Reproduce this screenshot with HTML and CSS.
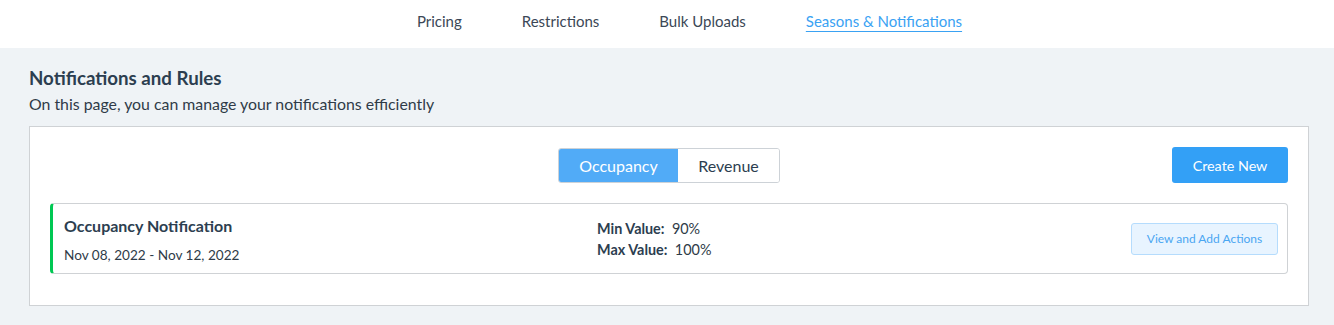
FILE: index.html
```html
<!DOCTYPE html>
<html>
<head>
<meta charset="utf-8">
<link rel="stylesheet" href="styles.css">
</head>
<body>
<nav class="topnav">
  <a class="nav-item">Pricing</a>
  <a class="nav-item">Restrictions</a>
  <a class="nav-item">Bulk Uploads</a>
  <a class="nav-item active">Seasons &amp; Notifications</a>
</nav>
<main class="page">
  <h1 class="title">Notifications and Rules</h1>
  <p class="subtitle">On this page, you can manage your notifications efficiently</p>
  <section class="panel">
    <div class="toolbar">
      <div></div>
      <div class="toggle">
        <button class="toggle-btn on">Occupancy</button>
        <button class="toggle-btn">Revenue</button>
      </div>
      <div class="toolbar-right">
        <button class="create-btn">Create New</button>
      </div>
    </div>
    <div class="card">
      <div class="card-main">
        <div class="card-title">Occupancy Notification</div>
        <div class="card-date">Nov 08, 2022 - Nov 12, 2022</div>
      </div>
      <div class="card-values">
        <div><b>Min Value:</b>&nbsp; 90%</div>
        <div><b>Max Value:</b>&nbsp; 100%</div>
      </div>
      <button class="action-btn">View and Add Actions</button>
    </div>
  </section>
</main>
</body>
</html>
```
FILE: styles.css
```css
* { box-sizing: border-box; }
html, body { margin: 0; padding: 0; }
body {
  font-family: Lato, "Open Sans", sans-serif;
  color: #2c3e50;
  background: #eff3f6;
  width: 1334px;
  height: 325px;
  overflow: hidden;
}
.topnav {
  height: 48px;
  background: #fff;
  display: flex;
  justify-content: center;
  align-items: center;
  gap: 60px;
  padding-left: 45px;
  padding-bottom: 7px;
}
.nav-item {
  font-size: 15px;
  color: #3b4756;
  text-decoration: none;
}
.nav-item.active {
  color: #3aa2f3;
  text-decoration: underline;
  text-underline-offset: 4px;
}
.page {
  padding: 18px 25px 0 29px;
}
.title {
  margin: 0;
  font-size: 18.7px;
  font-weight: 700;
  line-height: 24px;
  color: #2c3e50;
}
.subtitle {
  margin: 3px 0 0 0;
  font-size: 15.85px;
  line-height: 22px;
  color: #2f3b48;
}
.panel {
  margin-top: 11px;
  background: #fff;
  border: 1px solid #cfd2d5;
  padding: 20px 20px 31px 20px;
}
.toolbar {
  display: grid;
  grid-template-columns: 1fr auto 1fr;
  align-items: center;
}
.toolbar-right {
  display: flex;
  justify-content: flex-end;
}
.toggle {
  display: flex;
  border: 1px solid #cdd2d7;
  border-radius: 3px;
  overflow: hidden;
  height: 35px;
}
.toggle-btn {
  font-family: inherit;
  font-size: 16px;
  border: none;
  background: #fff;
  color: #2c3e50;
  padding: 0;
  height: 33px;
  cursor: pointer;
}
.toggle-btn.on {
  background: #51abf7;
  color: #fff;
  width: 119px;
}
.toggle-btn:not(.on) { width: 101px; }
.create-btn {
  font-family: inherit;
  font-size: 14.3px;
  border: none;
  background: #33a0f6;
  color: #fff;
  border-radius: 3px;
  height: 36px;
  width: 116px;
  cursor: pointer;
}
.card {
  margin-top: 20px;
  height: 71px;
  border: 1px solid #cfd2d5;
  border-left: 3px solid #00c853;
  border-radius: 4px;
  display: grid;
  grid-template-columns: 533px 1fr auto;
  align-items: center;
  padding: 0 9px 0 11px;
}
.card-title {
  font-size: 16px;
  font-weight: 700;
  line-height: 20px;
  color: #2c3e50;
  margin-top: 2px;
}
.card-date {
  font-size: 13.6px;
  line-height: 18px;
  margin-top: 10px;
  color: #2f3b48;
}
.card-values {
  font-size: 14.4px;
  line-height: 21px;
  color: #2f3b48;
  margin-top: 0;
}
.card-values b { color: #2c3e50; }
.action-btn {
  font-family: inherit;
  font-size: 12px;
  background: #e8f4ff;
  border: 1px solid #b5dcfd;
  color: #4aa6f2;
  border-radius: 3px;
  height: 32px;
  width: 147px;
  cursor: pointer;
  margin-top: 0;
}
```
